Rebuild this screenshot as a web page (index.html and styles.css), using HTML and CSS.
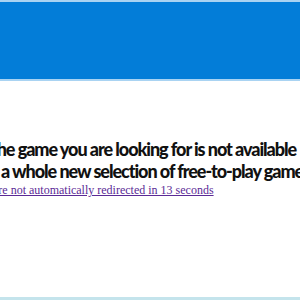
FILE: index.html
```html
<!DOCTYPE html>
<html lang="en">
<head>
  <meta charset="UTF-8">
  <title>Game not available</title>
  <link rel="stylesheet" href="styles.css">
</head>
<body>

<!-- Top banner -->
<div class="top-banner"></div>

<div class="notice">
  <h1 class="notice-title">
    <span class="line">The game you are looking for is not available</span>
    <span class="line line-sub">a whole new selection of free-to-play games</span>
  </h1>
  <p class="notice-redirect">
    <a href="#" class="redirect-link">If you are not automatically redirected in 13 seconds</a>
  </p>
</div>

<div class="page-footer"></div>

</body>
</html>
```

FILE: styles.css
```css
/* Reset */
* {
  box-sizing: border-box;
  margin: 0;
  padding: 0;
}
html, body {
  height: 100%;
  background: #fff;
  overflow: hidden;
}
body {
  display: flex;
  flex-direction: column;
}

/* Blue banner across the top */
.top-banner {
  flex: none;
  height: 81px;
  background: #037dd8;
  border-top: 2px solid #a9d3f2;
  border-bottom: 2px solid #a9d3f2;
}

/* Message block */
.notice {
  flex: 1;
  padding-top: 57px;
  margin-left: -13px;
  white-space: nowrap;
}
.notice-title {
  font-family: Lato, "Open Sans", sans-serif;
  font-weight: 900;
  font-size: 18px;
  line-height: 22px;
  letter-spacing: -1.05px;
  color: #111;
}
.notice-title .line {
  display: block;
}
.notice-title .line-sub {
  padding-left: 14px;
}
.notice-redirect {
  margin-top: 1px;
  margin-left: -26px;
  font-family: "Liberation Serif", serif;
  font-size: 12px;
}
.redirect-link {
  color: #5b2a96;
}

/* Thin line at the bottom */
.page-footer {
  flex: none;
  height: 3px;
  background: #c4e4ec;
}
```
